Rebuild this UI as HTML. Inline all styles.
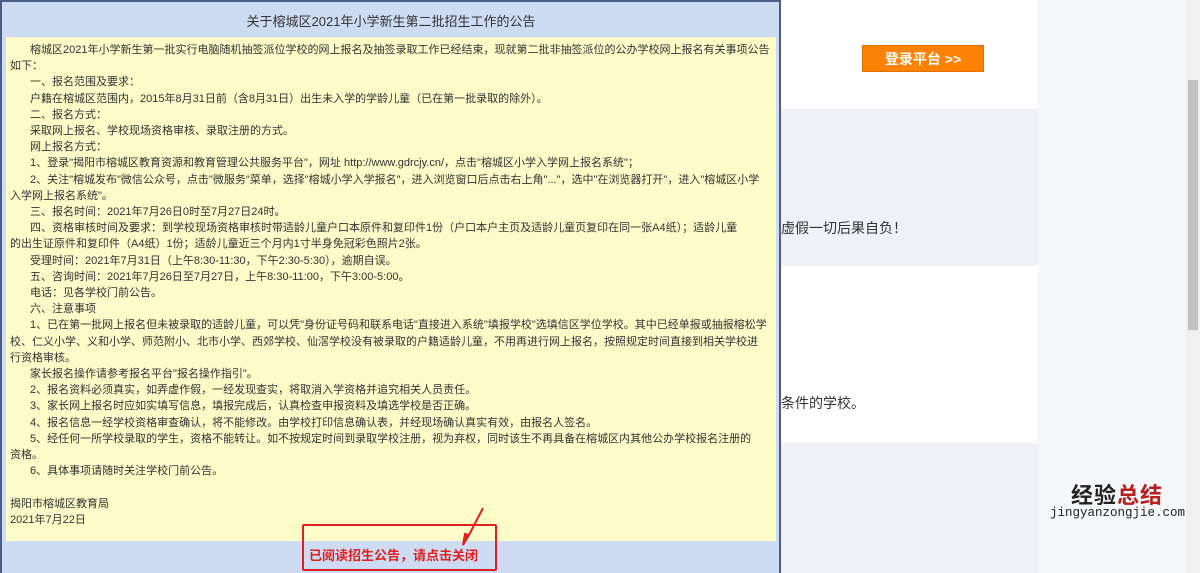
<!DOCTYPE html>
<html><head><meta charset="utf-8">
<style>
*{margin:0;padding:0;box-sizing:border-box}
body{width:1200px;height:573px;overflow:hidden;position:relative;background:#fff;font-family:"Liberation Sans","Noto Sans CJK SC",sans-serif}
.r{position:absolute}
.dlg{left:0;top:0;width:781px;height:573px;background:#cddcf3;border-left:2px solid #4b5b8c;border-right:2px solid #4b5b8c;border-top:2px solid #4b5b8c}
.title{left:6px;top:5px;width:770px;height:32px;line-height:34px;text-align:center;font-size:13px;color:#333}
.body{left:6px;top:37px;width:770px;height:504px;background:#fdfcc8;overflow:hidden}
.txt{position:absolute;left:4px;top:5px;font-size:11px;line-height:16.2px;color:#333;white-space:nowrap}
.i{padding-left:20px}
</style></head><body>
<div class="r" style="left:781px;top:0;width:257px;height:109px;background:#fff"></div>
<div class="r" style="left:862px;top:45px;width:122px;height:27px;background:#fb8204;border:1px solid #e07000;color:#fff;font-size:14px;font-weight:bold;line-height:26px;text-align:center">登录平台 &gt;&gt;</div>
<div class="r" style="left:781px;top:109px;width:257px;height:157px;background:#eff1f6"></div>
<div class="r" style="left:781px;top:218px;font-size:14px;color:#333">虚假一切后果自负！</div>
<div class="r" style="left:781px;top:266px;width:257px;height:177px;background:#fff"></div>
<div class="r" style="left:781px;top:393px;font-size:14px;color:#333">条件的学校。</div>
<div class="r" style="left:781px;top:443px;width:257px;height:130px;background:#eff1f6"></div>
<div class="r" style="left:1038px;top:0;width:148px;height:573px;background:#f6f7f9"></div>
<div class="r" style="left:1186px;top:0;width:14px;height:573px;background:#f0f0f0"></div>
<div class="r" style="left:1188px;top:80px;width:10px;height:250px;background:#c2c2c2"></div>
<div class="r" style="left:1071px;top:478px;font-size:22px;font-weight:bold;color:#222;letter-spacing:1px">经验<span style="color:#b82020">总结</span></div>
<div class="r" style="left:1050px;top:506px;font-size:12.5px;font-family:'Liberation Mono',monospace;color:#222">jingyanzongjie.com</div>

<div class="r dlg"></div>
<div class="r title">关于榕城区2021年小学新生第二批招生工作的公告</div>
<div class="r body"><div class="txt">
<div class="i">榕城区2021年小学新生第一批实行电脑随机抽签派位学校的网上报名及抽签录取工作已经结束，现就第二批非抽签派位的公办学校网上报名有关事项公告</div>
<div>如下：</div>
<div class="i">一、报名范围及要求：</div>
<div class="i">户籍在榕城区范围内，2015年8月31日前（含8月31日）出生未入学的学龄儿童（已在第一批录取的除外）。</div>
<div class="i">二、报名方式：</div>
<div class="i">采取网上报名、学校现场资格审核、录取注册的方式。</div>
<div class="i">网上报名方式：</div>
<div class="i">1、登录"揭阳市榕城区教育资源和教育管理公共服务平台"，网址 http://www.gdrcjy.cn/，点击"榕城区小学入学网上报名系统"；</div>
<div class="i">2、关注"榕城发布"微信公众号，点击"微服务"菜单，选择"榕城小学入学报名"，进入浏览窗口后点击右上角"..."，选中"在浏览器打开"，进入"榕城区小学</div>
<div>入学网上报名系统"。</div>
<div class="i">三、报名时间：2021年7月26日0时至7月27日24时。</div>
<div class="i">四、资格审核时间及要求：到学校现场资格审核时带适龄儿童户口本原件和复印件1份（户口本户主页及适龄儿童页复印在同一张A4纸）；适龄儿童</div>
<div>的出生证原件和复印件（A4纸）1份；适龄儿童近三个月内1寸半身免冠彩色照片2张。</div>
<div class="i">受理时间：2021年7月31日（上午8:30-11:30，下午2:30-5:30），逾期自误。</div>
<div class="i">五、咨询时间：2021年7月26日至7月27日，上午8:30-11:00，下午3:00-5:00。</div>
<div class="i">电话：见各学校门前公告。</div>
<div class="i">六、注意事项</div>
<div class="i">1、已在第一批网上报名但未被录取的适龄儿童，可以凭"身份证号码和联系电话"直接进入系统"填报学校"选填信区学位学校。其中已经单报或抽报榕松学</div>
<div>校、仁义小学、义和小学、师范附小、北市小学、西郊学校、仙滘学校没有被录取的户籍适龄儿童，不用再进行网上报名，按照规定时间直接到相关学校进</div>
<div>行资格审核。</div>
<div class="i">家长报名操作请参考报名平台"报名操作指引"。</div>
<div class="i">2、报名资料必须真实，如弄虚作假，一经发现查实，将取消入学资格并追究相关人员责任。</div>
<div class="i">3、家长网上报名时应如实填写信息，填报完成后，认真检查申报资料及填选学校是否正确。</div>
<div class="i">4、报名信息一经学校资格审查确认，将不能修改。由学校打印信息确认表，并经现场确认真实有效，由报名人签名。</div>
<div class="i">5、经任何一所学校录取的学生，资格不能转让。如不按规定时间到录取学校注册，视为弃权，同时该生不再具备在榕城区内其他公办学校报名注册的</div>
<div>资格。</div>
<div class="i">6、具体事项请随时关注学校门前公告。</div>
<div>&nbsp;</div>
<div>揭阳市榕城区教育局</div>
<div>2021年7月22日</div>
</div></div>
<div class="r" style="left:302px;top:524px;width:195px;height:47px;border:2px solid #e02020;border-radius:2px"></div>
<div class="r" style="left:309px;top:545px;font-size:13px;font-weight:bold;color:#e02020">已阅读招生公告，请点击关闭</div>
<svg class="r" style="left:455px;top:505px" width="35" height="45"><path d="M28 3 L14 30 L8 40 L10 29 L14 30" stroke="#e02020" stroke-width="2" fill="#e02020"/></svg>
</body></html>
